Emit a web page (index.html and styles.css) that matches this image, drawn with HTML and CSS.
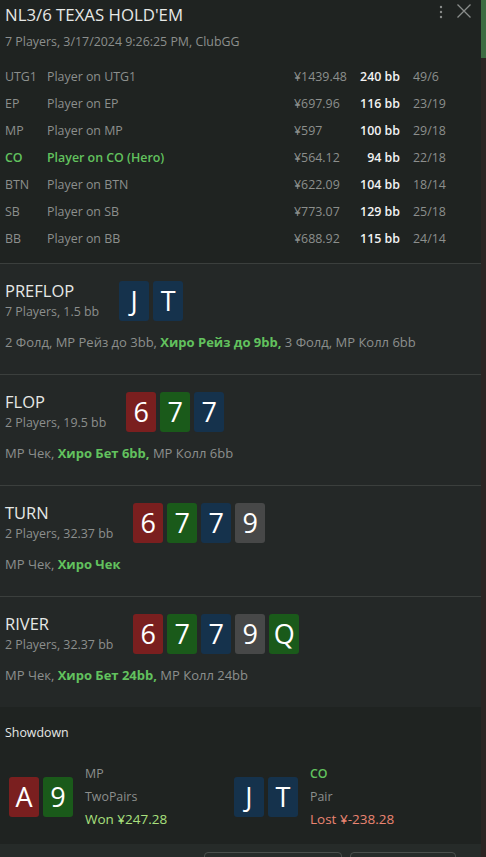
FILE: index.html
```html
<!DOCTYPE html>
<html lang="ru">
<head>
  <meta charset="UTF-8" />
  <title>Hand history</title>
  <link rel="stylesheet" href="styles.css">
</head>
<body>
  <div class="window">
    <div class="panel">
      <div class="hand-header">
        <div class="title-row">
          <h1>NL3/6 TEXAS HOLD'EM</h1>
          <div class="tools">
            <svg class="kebab" width="4" height="14" viewBox="0 0 4 14">
              <circle cx="2" cy="2" r="1.2" />
              <circle cx="2" cy="7" r="1.2" />
              <circle cx="2" cy="12" r="1.2" />
            </svg>
            <svg class="close" width="16" height="16" viewBox="0 0 16 16">
              <path d="M1.5 1.5 L14.5 14.5 M14.5 1.5 L1.5 14.5" />
            </svg>
          </div>
        </div>
        <div class="subtitle">7 Players, 3/17/2024 9:26:25 PM, ClubGG</div>

        <div class="players" id="players">
          <!-- JSで生成 -->
        </div>
      </div>

      <div id="streets">
        <!-- JSで生成 -->
      </div>

      <div class="showdown">
        <div class="showdown-title">Showdown</div>
        <div class="showdown-hands">
          <div class="sd-hand">
            <div class="cards">
              <span class="card red">A</span>
              <span class="card green">9</span>
            </div>
            <div class="sd-info">
              <div>MP</div>
              <div>TwoPairs</div>
              <div class="won">Won ¥247.28</div>
            </div>
          </div>
          <div class="sd-hand">
            <div class="cards">
              <span class="card blue">J</span>
              <span class="card blue">T</span>
            </div>
            <div class="sd-info">
              <div class="hero">CO</div>
              <div>Pair</div>
              <div class="lost">Lost ¥-238.28</div>
            </div>
          </div>
        </div>
      </div>

      <div class="footer">
        <button class="btn btn-wide"></button>
        <button class="btn"></button>
      </div>
    </div>
    <div class="scrollbar"><div class="thumb"></div></div>
  </div>

  <script>
    const players = [
      ['UTG1', 'Player on UTG1', '¥1439.48', '240 bb', '49/6'],
      ['EP', 'Player on EP', '¥697.96', '116 bb', '23/19'],
      ['MP', 'Player on MP', '¥597', '100 bb', '29/18'],
      ['CO', 'Player on CO (Hero)', '¥564.12', '94 bb', '22/18', true],
      ['BTN', 'Player on BTN', '¥622.09', '104 bb', '18/14'],
      ['SB', 'Player on SB', '¥773.07', '129 bb', '25/18'],
      ['BB', 'Player on BB', '¥688.92', '115 bb', '24/14']
    ];

    const streets = [
      {
        name: 'PREFLOP', info: '7 Players, 1.5 bb',
        cards: [['J', 'blue'], ['T', 'blue']],
        actions: ['2 Фолд, MP Рейз до 3bb, ', 'Хиро Рейз до 9bb,', ' 3 Фолд, MP Колл 6bb']
      },
      {
        name: 'FLOP', info: '2 Players, 19.5 bb',
        cards: [['6', 'red'], ['7', 'green'], ['7', 'blue']],
        actions: ['MP Чек, ', 'Хиро Бет 6bb,', ' MP Колл 6bb']
      },
      {
        name: 'TURN', info: '2 Players, 32.37 bb',
        cards: [['6', 'red'], ['7', 'green'], ['7', 'blue'], ['9', 'gray']],
        actions: ['MP Чек, ', 'Хиро Чек', '']
      },
      {
        name: 'RIVER', info: '2 Players, 32.37 bb',
        cards: [['6', 'red'], ['7', 'green'], ['7', 'blue'], ['9', 'gray'], ['Q', 'green']],
        actions: ['MP Чек, ', 'Хиро Бет 24bb,', ' MP Колл 24bb']
      }
    ];

    const playersEl = document.getElementById('players');
    players.forEach(p => {
      const row = document.createElement('div');
      row.className = 'player-row' + (p[5] ? ' hero-row' : '');
      row.innerHTML = `
        <span>${p[0]}</span>
        <span>${p[1]}</span>
        <span>${p[2]}</span>
        <span class="stack">${p[3]}</span>
        <span class="stats">${p[4]}</span>
      `;
      playersEl.appendChild(row);
    });

    const streetsEl = document.getElementById('streets');
    streets.forEach(s => {
      const sec = document.createElement('div');
      sec.className = 'street';
      const cards = s.cards.map(c => `<span class="card ${c[1]}">${c[0]}</span>`).join('');
      sec.innerHTML = `
        <div class="street-head">
          <div class="street-label">
            <div class="street-name">${s.name}</div>
            <div class="street-info">${s.info}</div>
          </div>
          <div class="cards">${cards}</div>
        </div>
        <div class="actions">${s.actions[0]}<b class="hero">${s.actions[1]}</b>${s.actions[2]}</div>
      `;
      streetsEl.appendChild(sec);
    });
  </script>
</body>
</html>
```

FILE: styles.css
```css
html, body {
  margin: 0;
  padding: 0;
  height: 100%;
  overflow: hidden;
}
body {
  font-family: "Open Sans", "Noto Sans", sans-serif;
  font-size: 12.4px;
  color: #8c8f8d;
  background-color: #1f2321;
}
.window {
  display: flex;
  height: 857px;
}
.panel {
  flex: 1;
  display: flex;
  flex-direction: column;
  overflow: hidden;
}
.scrollbar {
  width: 5px;
  background-color: #2c2422;
}
.thumb {
  height: 58px;
  background-color: #3e6b41;
}

/* header */
.hand-header {
  padding: 3px 0 11px 0;
}
.title-row {
  display: flex;
  justify-content: space-between;
  align-items: flex-start;
  padding: 0 9px 0 5px;
}
h1 {
  margin: 0;
  font-size: 16.8px;
  font-weight: 400;
  line-height: 24px;
  color: #e6e8e6;
}
.tools {
  display: flex;
  align-items: flex-start;
  gap: 13px;
}
.kebab {
  margin-top: 2px;
  fill: #8a8d8b;
}
.close {
  stroke: #8a8d8b;
  stroke-width: 1.3;
  fill: none;
}
.subtitle {
  padding: 6px 5px 0;
  line-height: 18px;
}
.players {
  margin-top: 12px;
  padding: 0 5px;
}
.player-row {
  display: grid;
  grid-template-columns: 42px 1fr 58px 48px 76px;
  line-height: 27px;
  white-space: nowrap;
}
.player-row .stack {
  text-align: right;
  color: #f2f2f2;
  font-weight: 600;
}
.player-row .stats {
  padding-left: 13px;
}
.hero-row span:nth-child(1),
.hero-row span:nth-child(2) {
  color: #62c25e;
  font-weight: 600;
}

/* streets */
.street {
  background-color: #242827;
  border-top: 1px solid #3b3f3d;
  height: 111px;
  box-sizing: border-box;
  padding: 16px 5px 0;
}
.street-head {
  display: flex;
  align-items: center;
  gap: 20px;
}
.street-name {
  font-size: 16.5px;
  line-height: 22px;
  color: #e6e8e6;
}
.street-info {
  line-height: 19px;
}
.actions {
  margin-top: 12px;
  font-size: 13px;
  line-height: 18px;
  white-space: nowrap;
}
.hero {
  color: #62c25e;
  font-weight: 700;
}
.cards {
  display: flex;
  gap: 4px;
}
.card {
  width: 30px;
  height: 40px;
  border-radius: 3px;
  display: flex;
  align-items: center;
  justify-content: center;
  font-size: 27px;
  color: #ffffff;
}
.card.red { background-color: #7a1f1f; }
.card.green { background-color: #1a5a1a; }
.card.blue { background-color: #15324c; }
.card.gray { background-color: #474848; }

/* showdown */
.showdown {
  background-color: #1f2321;
  padding: 17px 5px 13px 9px;
}
.showdown-title {
  margin-left: -4px;
  line-height: 18px;
  color: #e6e8e6;
  font-weight: 500;
}
.showdown-hands {
  display: flex;
  margin-top: 20px;
}
.sd-hand {
  width: 225px;
  display: flex;
  align-items: center;
  gap: 12px;
}
.sd-info {
  line-height: 23px;
}
.sd-info .hero {
  font-weight: 600;
}
.won {
  color: #a9e07e;
  font-size: 13.5px;
}
.lost {
  color: #ea8572;
  font-size: 13.5px;
}

/* footer */
.footer {
  flex: 1;
  background-color: #262b29;
  display: flex;
  gap: 8px;
  padding: 8px 0 0 204px;
}
.btn {
  width: 138px;
  height: 30px;
  background: transparent;
  border: 1px solid #4a4f4c;
  border-radius: 4px;
}
.btn:not(.btn-wide) {
  width: 106px;
}
```
